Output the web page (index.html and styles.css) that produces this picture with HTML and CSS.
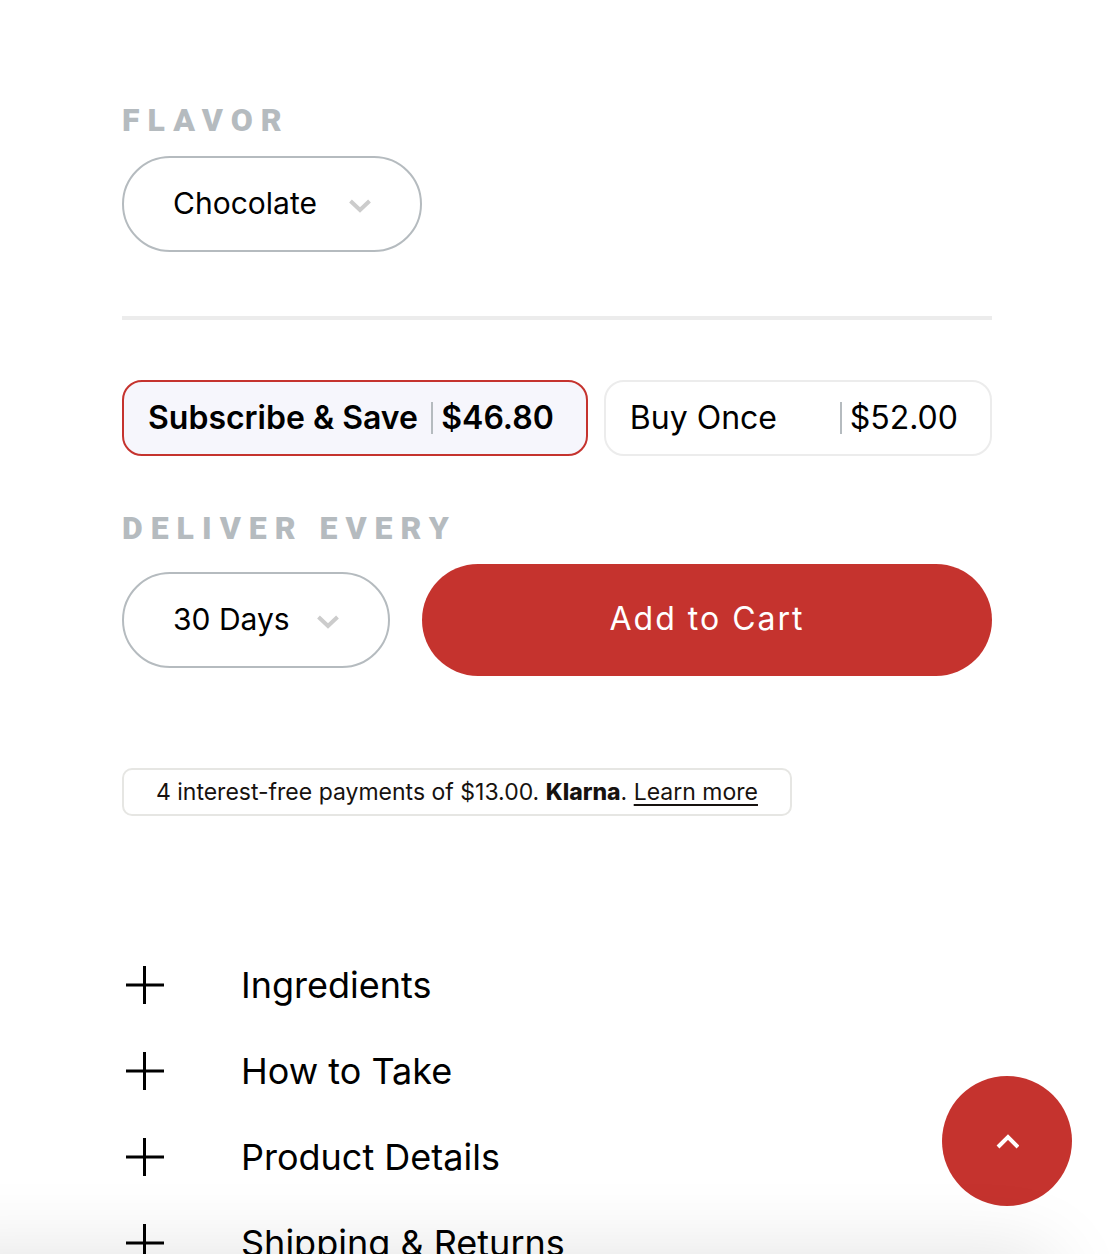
FILE: index.html
```html
<!DOCTYPE html>
<html lang="en">
<head>
<meta charset="utf-8">
<meta name="viewport" content="width=device-width, initial-scale=1">
<title>Product options</title>
<link rel="stylesheet" href="styles.css">
</head>
<body>
<main class="product">
  <form class="purchase">
    <label class="field-label" for="flavor">FLAVOR</label>
    <div class="picker picker-flavor">
      <select id="flavor" class="picker-select"><option>Chocolate</option></select>
      <svg class="picker-arrow" viewBox="0 0 22 14" aria-hidden="true"><path d="M1.500 2l9.500 9 9.500-9"/></svg>
    </div>

    <hr class="divider">

    <div class="plans">
      <label class="plan">
        <input class="plan-input" type="radio" name="plan" checked>
        <span>Subscribe &amp; Save</span>
        <span class="plan-price">$46.80</span>
      </label>
      <label class="plan">
        <input class="plan-input" type="radio" name="plan">
        <span>Buy Once</span>
        <span class="plan-price">$52.00</span>
      </label>
    </div>

    <label class="field-label" for="interval">DELIVER EVERY</label>
    <div class="order">
      <div class="picker picker-interval">
        <select id="interval" class="picker-select"><option>30 Days</option></select>
        <svg class="picker-arrow" viewBox="0 0 22 14" aria-hidden="true"><path d="M1.500 2l9.500 9 9.500-9"/></svg>
      </div>
      <button class="cart" type="button">Add to Cart</button>
    </div>
  </form>

  <p class="klarna"><span>4 interest-free payments of $13.00. <b class="klarna-brand">Klarna</b>. <a class="klarna-link" href="#klarna">Learn more</a></span></p>

  <div class="accordion">
    <button class="accordion-row" type="button"><svg class="plus" viewBox="0 0 38 38" aria-hidden="true"><path d="M0 19h38M18.500 0v38"/></svg>Ingredients</button>
    <button class="accordion-row" type="button"><svg class="plus" viewBox="0 0 38 38" aria-hidden="true"><path d="M0 19h38M18.500 0v38"/></svg>How to Take</button>
    <button class="accordion-row" type="button"><svg class="plus" viewBox="0 0 38 38" aria-hidden="true"><path d="M0 19h38M18.500 0v38"/></svg>Product Details</button>
    <button class="accordion-row" type="button"><svg class="plus" viewBox="0 0 38 38" aria-hidden="true"><path d="M0 19h38M18.500 0v38"/></svg>Shipping &amp; Returns</button>
  </div>
</main>

<button class="to-top" type="button" aria-label="Back to top"><svg class="to-top-icon" viewBox="0 0 24 16" aria-hidden="true"><path d="M3 14l10-10 10 10"/></svg></button>
<div class="bottom-shade"></div>
</body>
</html>
```
FILE: styles.css
```css
* {
  box-sizing: border-box;
}

body {
  margin: 0;
  height: 100vh;
  overflow: hidden;
  background: #fff;
  color: #000;
  font-family: Inter, "Liberation Sans", sans-serif;
}

button,
select {
  font: inherit;
  color: inherit;
}

.product {
  padding: 104px 118px 0 122px;
}

.field-label {
  display: block;
  color: #b5bbbf;
  font-family: Roboto, "Liberation Sans", sans-serif;
  font-size: 32px;
  font-weight: 900;
  line-height: 32px;
  letter-spacing: 8px;
}

.picker {
  display: grid;
  align-items: center;
}

.picker-flavor {
  width: 300px;
  margin-top: 20px;
}

.picker-interval {
  width: 268px;
}

.picker-select {
  grid-area: 1 / 1;
  width: 100%;
  height: 96px;
  padding: 0 0 2px 49px;
  border: 2px solid #b5bbbf;
  border-radius: 48px;
  background: #fff;
  font-size: 30px;
  appearance: none;
}

.picker-arrow {
  grid-area: 1 / 1;
  justify-self: end;
  width: 22px;
  height: 14px;
  margin: 4px 51px 0 0;
  fill: none;
  stroke: #ccc;
  stroke-width: 4;
  pointer-events: none;
}

.divider {
  height: 4px;
  margin: 64px 0 60px;
  border: 0;
  background: #ececec;
}

.plans {
  display: grid;
  grid-template-columns: 6fr 5fr;
  gap: 16px;
  margin-bottom: 56px;
}

.plan {
  display: flex;
  align-items: center;
  justify-content: space-between;
  height: 76px;
  padding: 0 32px 0 24px;
  border: 2px solid #ececec;
  border-radius: 20px;
  font-size: 32px;
  line-height: 32px;
  white-space: nowrap;
}

.plan:has(:checked) {
  border-color: #c5332e;
  background: #f6f6fc;
  font-weight: 600;
}

.plan-input {
  position: absolute;
  opacity: 0;
}

.plan-price {
  padding-left: 8px;
  border-left: 2px solid #b5bbbf;
}

.order {
  display: flex;
  align-items: center;
  gap: 32px;
  margin-top: 20px;
}

.cart {
  flex: 1;
  height: 112px;
  padding: 0 0 4px;
  border: 0;
  border-radius: 56px;
  background: #c5332e;
  color: #fff;
  font-size: 32px;
  letter-spacing: 2px;
}

.klarna {
  display: flex;
  justify-content: center;
  align-items: center;
  width: 77%;
  height: 48px;
  margin: 92px 0 0;
  border: 2px solid #e6e6e3;
  border-radius: 10px;
  color: #17120f;
  font-size: 23px;
  line-height: 28px;
  white-space: nowrap;
}

.klarna-brand {
  font-weight: 800;
}

.klarna-link {
  color: inherit;
  text-decoration-thickness: 2px;
  text-underline-offset: 4px;
}

.accordion {
  margin-top: 126px;
}

.accordion-row {
  display: flex;
  align-items: center;
  gap: 77px;
  width: 100%;
  height: 86px;
  padding: 0 0 0 4px;
  border: 0;
  background: none;
  font-size: 36px;
  text-align: left;
}

.plus {
  width: 38px;
  height: 38px;
  stroke: #000;
  stroke-width: 3;
}

.to-top {
  position: fixed;
  right: 38px;
  bottom: 48px;
  display: grid;
  place-items: center;
  width: 130px;
  height: 130px;
  border: 0;
  border-radius: 50%;
  background: #c5332e;
}

.to-top-icon {
  width: 24px;
  height: 16px;
  fill: none;
  stroke: #fff;
  stroke-width: 4;
}

.bottom-shade {
  position: fixed;
  top: 100%;
  right: 60px;
  left: -80px;
  height: 120px;
  box-shadow: 0 0 80px rgba(0, 0, 0, .12);
  pointer-events: none;
}
```
